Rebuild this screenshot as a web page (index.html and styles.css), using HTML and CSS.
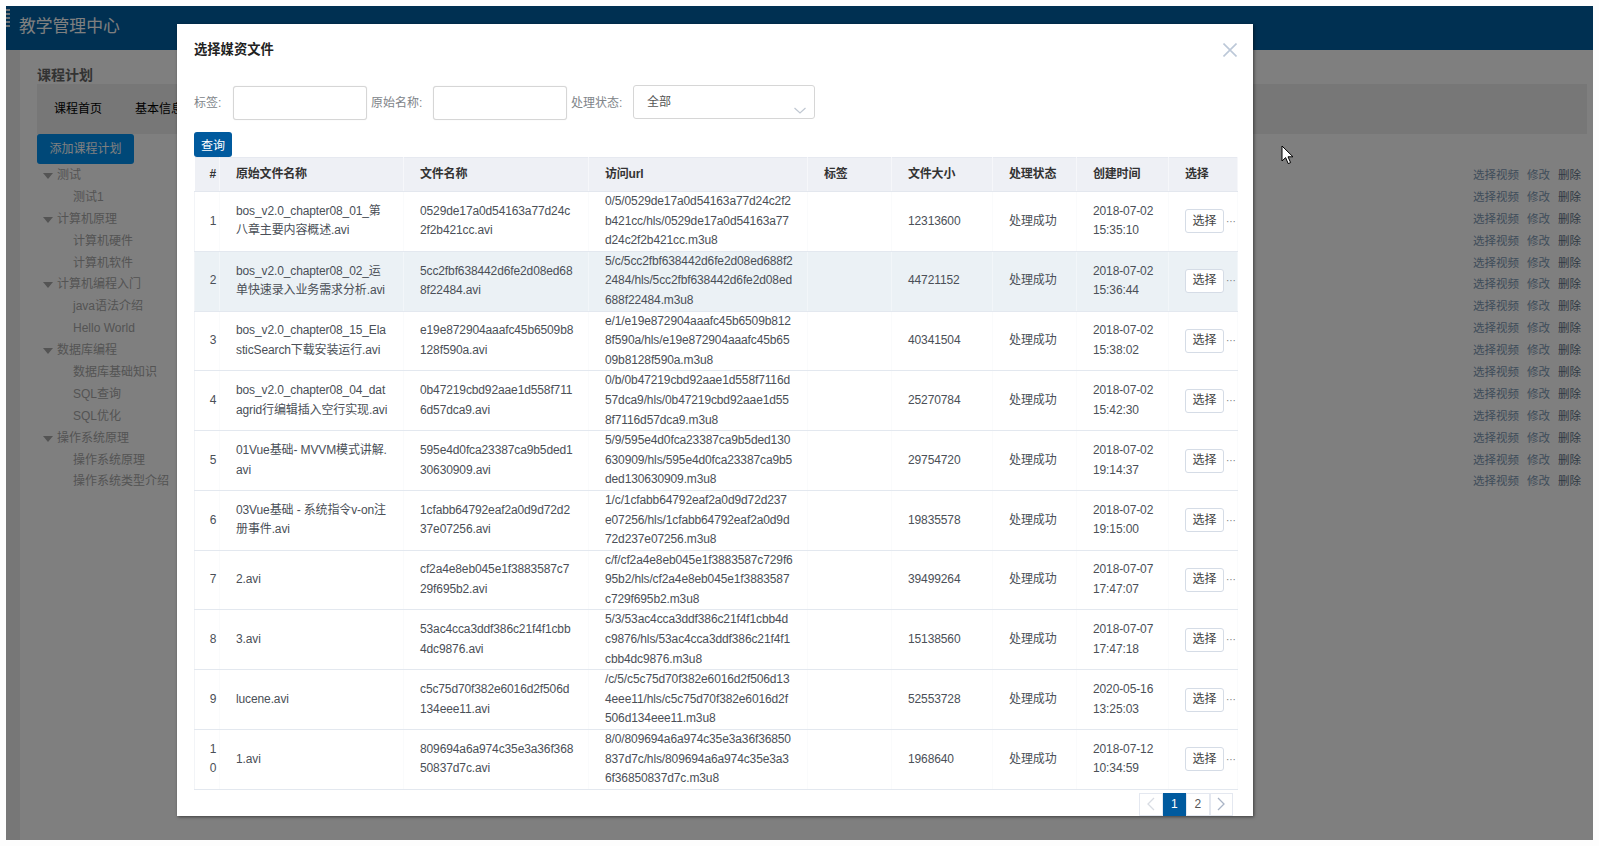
FILE: index.html
```html
<!DOCTYPE html>
<html lang="zh-CN">
  <head>
    <meta charset="UTF-8" />
    <title>教学管理中心</title>
    <link rel="stylesheet" href="styles.css">
  </head>
  <body>
    <div class="app">
      <div class="topbar">
        <span class="logo-mark"></span>
        <span class="brand">教学管理中心</span>
      </div>
      <div class="layout">
        <div class="strip"></div>
        <div class="content">
          <h2 class="page-title">课程计划</h2>
          <div class="tabs">
            <span class="tab">课程首页</span>
            <span class="tab">基本信息</span>
          </div>
          <button class="add-btn">添加课程计划</button>
          <div class="plan-list">
            <div class="plan-row parent"><span class="tree-name"><i class="caret"></i>测试</span><span class="ops"><a>选择视频</a><a>修改</a><a class="del">删除</a></span></div>
            <div class="plan-row child"><span class="tree-name">测试1</span><span class="ops"><a>选择视频</a><a>修改</a><a class="del">删除</a></span></div>
            <div class="plan-row parent"><span class="tree-name"><i class="caret"></i>计算机原理</span><span class="ops"><a>选择视频</a><a>修改</a><a class="del">删除</a></span></div>
            <div class="plan-row child"><span class="tree-name">计算机硬件</span><span class="ops"><a>选择视频</a><a>修改</a><a class="del">删除</a></span></div>
            <div class="plan-row child"><span class="tree-name">计算机软件</span><span class="ops"><a>选择视频</a><a>修改</a><a class="del">删除</a></span></div>
            <div class="plan-row parent"><span class="tree-name"><i class="caret"></i>计算机编程入门</span><span class="ops"><a>选择视频</a><a>修改</a><a class="del">删除</a></span></div>
            <div class="plan-row child"><span class="tree-name">java语法介绍</span><span class="ops"><a>选择视频</a><a>修改</a><a class="del">删除</a></span></div>
            <div class="plan-row child"><span class="tree-name">Hello World</span><span class="ops"><a>选择视频</a><a>修改</a><a class="del">删除</a></span></div>
            <div class="plan-row parent"><span class="tree-name"><i class="caret"></i>数据库编程</span><span class="ops"><a>选择视频</a><a>修改</a><a class="del">删除</a></span></div>
            <div class="plan-row child"><span class="tree-name">数据库基础知识</span><span class="ops"><a>选择视频</a><a>修改</a><a class="del">删除</a></span></div>
            <div class="plan-row child"><span class="tree-name">SQL查询</span><span class="ops"><a>选择视频</a><a>修改</a><a class="del">删除</a></span></div>
            <div class="plan-row child"><span class="tree-name">SQL优化</span><span class="ops"><a>选择视频</a><a>修改</a><a class="del">删除</a></span></div>
            <div class="plan-row parent"><span class="tree-name"><i class="caret"></i>操作系统原理</span><span class="ops"><a>选择视频</a><a>修改</a><a class="del">删除</a></span></div>
            <div class="plan-row child"><span class="tree-name">操作系统原理</span><span class="ops"><a>选择视频</a><a>修改</a><a class="del">删除</a></span></div>
            <div class="plan-row child"><span class="tree-name">操作系统类型介绍</span><span class="ops"><a>选择视频</a><a>修改</a><a class="del">删除</a></span></div>
          </div>
        </div>
      </div>

      <div class="overlay">
        <div class="dialog">
          <div class="dialog-title">选择媒资文件</div>
          <svg class="dialog-close" viewBox="0 0 14 14" width="14" height="14"><path d="M0.5 0.5L13.5 13.5M13.5 0.5L0.5 13.5" fill="none" stroke="#bcc8d8" stroke-width="1.6"/></svg>

          <div class="filter-row">
            <label class="filter-label label-tag">标签:</label>
            <input class="filter-input" type="text" />
            <label class="filter-label">原始名称:</label>
            <input class="filter-input" type="text" />
            <label class="filter-label">处理状态:</label>
            <div class="filter-select">
              全部
              <svg class="select-arrow" viewBox="0 0 12 7" width="12" height="7"><path d="M0.5 1L6 6L11.5 1" fill="none" stroke="#c0c8d2" stroke-width="1.2"/></svg>
            </div>
          </div>
          <button class="query-btn">查询</button>

          <table class="media-table">
            <thead>
              <tr>
                <th class="col-no">#</th>
                <th class="col-origin">原始文件名称</th>
                <th class="col-file">文件名称</th>
                <th class="col-url">访问url</th>
                <th class="col-tag">标签</th>
                <th class="col-size">文件大小</th>
                <th class="col-status">处理状态</th>
                <th class="col-time">创建时间</th>
                <th class="col-pick">选择</th>
              </tr>
            </thead>
            <tbody>
              <tr>
                <td class="col-no">1</td>
                <td>bos_v2.0_chapter08_01_第<br>八章主要内容概述.avi</td>
                <td>0529de17a0d54163a77d24c<br>2f2b421cc.avi</td>
                <td>0/5/0529de17a0d54163a77d24c2f2<br>b421cc/hls/0529de17a0d54163a77<br>d24c2f2b421cc.m3u8</td>
                <td></td>
                <td>12313600</td>
                <td>处理成功</td>
                <td>2018-07-02<br>15:35:10</td>
                <td class="col-pick"><button class="pick-btn">选择</button><span class="more">···</span></td>
              </tr>
              <tr class="hover">
                <td class="col-no">2</td>
                <td>bos_v2.0_chapter08_02_运<br>单快速录入业务需求分析.avi</td>
                <td>5cc2fbf638442d6fe2d08ed68<br>8f22484.avi</td>
                <td>5/c/5cc2fbf638442d6fe2d08ed688f2<br>2484/hls/5cc2fbf638442d6fe2d08ed<br>688f22484.m3u8</td>
                <td></td>
                <td>44721152</td>
                <td>处理成功</td>
                <td>2018-07-02<br>15:36:44</td>
                <td class="col-pick"><button class="pick-btn">选择</button><span class="more">···</span></td>
              </tr>
              <tr>
                <td class="col-no">3</td>
                <td>bos_v2.0_chapter08_15_Ela<br>sticSearch下载安装运行.avi</td>
                <td>e19e872904aaafc45b6509b8<br>128f590a.avi</td>
                <td>e/1/e19e872904aaafc45b6509b812<br>8f590a/hls/e19e872904aaafc45b65<br>09b8128f590a.m3u8</td>
                <td></td>
                <td>40341504</td>
                <td>处理成功</td>
                <td>2018-07-02<br>15:38:02</td>
                <td class="col-pick"><button class="pick-btn">选择</button><span class="more">···</span></td>
              </tr>
              <tr>
                <td class="col-no">4</td>
                <td>bos_v2.0_chapter08_04_dat<br>agrid行编辑插入空行实现.avi</td>
                <td>0b47219cbd92aae1d558f711<br>6d57dca9.avi</td>
                <td>0/b/0b47219cbd92aae1d558f7116d<br>57dca9/hls/0b47219cbd92aae1d55<br>8f7116d57dca9.m3u8</td>
                <td></td>
                <td>25270784</td>
                <td>处理成功</td>
                <td>2018-07-02<br>15:42:30</td>
                <td class="col-pick"><button class="pick-btn">选择</button><span class="more">···</span></td>
              </tr>
              <tr>
                <td class="col-no">5</td>
                <td>01Vue基础- MVVM模式讲解.<br>avi</td>
                <td>595e4d0fca23387ca9b5ded1<br>30630909.avi</td>
                <td>5/9/595e4d0fca23387ca9b5ded130<br>630909/hls/595e4d0fca23387ca9b5<br>ded130630909.m3u8</td>
                <td></td>
                <td>29754720</td>
                <td>处理成功</td>
                <td>2018-07-02<br>19:14:37</td>
                <td class="col-pick"><button class="pick-btn">选择</button><span class="more">···</span></td>
              </tr>
              <tr>
                <td class="col-no">6</td>
                <td>03Vue基础 - 系统指令v-on注<br>册事件.avi</td>
                <td>1cfabb64792eaf2a0d9d72d2<br>37e07256.avi</td>
                <td>1/c/1cfabb64792eaf2a0d9d72d237<br>e07256/hls/1cfabb64792eaf2a0d9d<br>72d237e07256.m3u8</td>
                <td></td>
                <td>19835578</td>
                <td>处理成功</td>
                <td>2018-07-02<br>19:15:00</td>
                <td class="col-pick"><button class="pick-btn">选择</button><span class="more">···</span></td>
              </tr>
              <tr>
                <td class="col-no">7</td>
                <td>2.avi</td>
                <td>cf2a4e8eb045e1f3883587c7<br>29f695b2.avi</td>
                <td>c/f/cf2a4e8eb045e1f3883587c729f6<br>95b2/hls/cf2a4e8eb045e1f3883587<br>c729f695b2.m3u8</td>
                <td></td>
                <td>39499264</td>
                <td>处理成功</td>
                <td>2018-07-07<br>17:47:07</td>
                <td class="col-pick"><button class="pick-btn">选择</button><span class="more">···</span></td>
              </tr>
              <tr>
                <td class="col-no">8</td>
                <td>3.avi</td>
                <td>53ac4cca3ddf386c21f4f1cbb<br>4dc9876.avi</td>
                <td>5/3/53ac4cca3ddf386c21f4f1cbb4d<br>c9876/hls/53ac4cca3ddf386c21f4f1<br>cbb4dc9876.m3u8</td>
                <td></td>
                <td>15138560</td>
                <td>处理成功</td>
                <td>2018-07-07<br>17:47:18</td>
                <td class="col-pick"><button class="pick-btn">选择</button><span class="more">···</span></td>
              </tr>
              <tr>
                <td class="col-no">9</td>
                <td>lucene.avi</td>
                <td>c5c75d70f382e6016d2f506d<br>134eee11.avi</td>
                <td>/c/5/c5c75d70f382e6016d2f506d13<br>4eee11/hls/c5c75d70f382e6016d2f<br>506d134eee11.m3u8</td>
                <td></td>
                <td>52553728</td>
                <td>处理成功</td>
                <td>2020-05-16<br>13:25:03</td>
                <td class="col-pick"><button class="pick-btn">选择</button><span class="more">···</span></td>
              </tr>
              <tr>
                <td class="col-no">1<br>0</td>
                <td>1.avi</td>
                <td>809694a6a974c35e3a36f368<br>50837d7c.avi</td>
                <td>8/0/809694a6a974c35e3a36f36850<br>837d7c/hls/809694a6a974c35e3a3<br>6f36850837d7c.m3u8</td>
                <td></td>
                <td>1968640</td>
                <td>处理成功</td>
                <td>2018-07-12<br>10:34:59</td>
                <td class="col-pick"><button class="pick-btn">选择</button><span class="more">···</span></td>
              </tr>
            </tbody>
          </table>

          <div class="pager">
            <span class="page-item"><svg viewBox="0 0 8 14" width="8" height="14"><path d="M7 1L1 7L7 13" fill="none" stroke="#d8dce3" stroke-width="1.3"/></svg></span>
            <span class="page-item active">1</span>
            <span class="page-item">2</span>
            <span class="page-item"><svg viewBox="0 0 8 14" width="8" height="14"><path d="M1 1L7 7L1 13" fill="none" stroke="#a9b4c6" stroke-width="1.3"/></svg></span>
          </div>
        </div>
      </div>

      <svg class="cursor" viewBox="0 0 13 20" width="13" height="20"><path d="M1 1V16L4.6 12.6L7.2 18.6L9.6 17.6L7 11.8H12Z" fill="#fff" stroke="#000" stroke-width="1"/></svg>
    </div>
  </body>
</html>
```

FILE: styles.css
```css
* {
  box-sizing: border-box;
}
html,
body {
  height: 100%;
}
body {
  margin: 0;
  padding: 6px;
  background: #fdfdfd;
  font-family: "Liberation Sans", "Noto Sans CJK SC", sans-serif;
  font-size: 12px;
  overflow: hidden;
}
.app {
  position: relative;
  width: 1587px;
  height: 834px;
  background: #fff;
  overflow: hidden;
}
.topbar {
  display: flex;
  align-items: center;
  height: 44px;
  background: #0060a4;
  color: #fff;
}
.logo-mark {
  width: 4px;
  height: 18px;
  margin-top: -20px;
  background: repeating-linear-gradient(to bottom, #d8e2ea 0, #d8e2ea 2px, #0060a4 2px, #0060a4 4px);
}
.brand {
  margin: -6px 0 0 9px;
  font-size: 16.8px;
}
.layout {
  display: flex;
}
.strip {
  width: 14px;
  height: 790px;
  background: #eee;
}
.content {
  flex: 1;
  padding: 16px 12px 0 17px;
}
.page-title {
  margin: 0;
  height: 18px;
  font-size: 14px;
  line-height: 18px;
  color: #666;
}
.tabs {
  display: flex;
  gap: 33px;
  align-items: center;
  height: 50px;
  margin-right: -6px;
  padding: 0 0 4px 17px;
  background: #eee;
  color: #000;
}
.add-btn {
  display: block;
  width: 97px;
  height: 30px;
  margin: 0;
  padding: 0 0 4px;
  border: none;
  border-radius: 3px;
  background: #0090f0;
  color: #fff;
  font: inherit;
}
.plan-list {
  margin-top: 1px;
}
.plan-row {
  display: flex;
  justify-content: space-between;
  height: 21.9px;
  line-height: 21.9px;
}
.tree-name {
  color: #a8a8a8;
}
.parent .tree-name {
  padding-left: 6px;
}
.child .tree-name {
  padding-left: 36px;
}
.caret {
  display: inline-block;
  width: 0;
  height: 0;
  margin-right: 4px;
  vertical-align: 0;
  border-left: 5.5px solid transparent;
  border-right: 5.5px solid transparent;
  border-top: 6px solid #a8a8a8;
}
.ops {
  display: flex;
  gap: 8px;
  font-size: 11.5px;
}
.ops a {
  color: #7f9ab5;
}
.ops .del {
  color: #5f7488;
}

/* dialog over the page */
.overlay {
  position: absolute;
  top: 0;
  left: 0;
  right: 0;
  bottom: 0;
  padding: 18px 0 0 171px;
  background: rgba(0, 0, 0, 0.5);
}
.dialog {
  position: relative;
  width: 1076px;
  height: 792px;
  padding: 17px 16px 0 17px;
  background: #fff;
  box-shadow: 1px 1px 3px rgba(0, 0, 0, 0.5);
}
.dialog-title {
  height: 18px;
  font-size: 13.3px;
  font-weight: bold;
  line-height: 18px;
  color: #222;
}
.dialog-close {
  position: absolute;
  top: 19px;
  right: 16px;
}
.filter-row {
  display: flex;
  align-items: center;
  height: 35px;
  margin-top: 26px;
}
.filter-label {
  padding-bottom: 2px;
  color: #808489;
  white-space: nowrap;
}
.label-tag {
  width: 39px;
}
.filter-input {
  width: 134px;
  height: 34px;
  margin: 0 4px 0 0;
  border: 1px solid #d6d6d6;
  border-radius: 3px;
  box-shadow: 0 0 1px rgba(0, 0, 0, 0.15);
  background: #fff;
}
.filter-input + .filter-label {
  width: 62px;
}
.filter-select {
  position: relative;
  width: 182px;
  height: 34px;
  margin-top: -1px;
  padding-left: 13px;
  border: 1px solid #d6d6d6;
  border-radius: 3px;
  line-height: 33px;
  color: #555;
}
.select-arrow {
  position: absolute;
  right: 8px;
  bottom: 4px;
}
.query-btn {
  display: block;
  width: 38px;
  height: 25px;
  margin-top: 12px;
  padding: 0;
  border: none;
  border-radius: 3px;
  background: #005a9e;
  color: #fff;
  font: inherit;
}
.media-table {
  width: 1043px;
  border-collapse: collapse;
  table-layout: fixed;
  color: #4a4f57;
  line-height: 19.6px;
}
.media-table th {
  height: 34px;
  padding: 0 0 0 16px;
  border-top: 1px solid #e6e9f0;
  border-bottom: 1px solid #e3e7ee;
  border-right: 1px solid #f6f7fa;
  background: #eef0f5;
  color: #333;
  font-weight: bold;
  letter-spacing: -0.2px;
  text-align: left;
}
.media-table td {
  height: 59.3px;
  padding: 0 0 0 16px;
  border-bottom: 1px solid #e3e8ef;
  border-right: 1px solid #fafbfc;
  letter-spacing: -0.12px;
  white-space: nowrap;
}
.media-table td:first-child {
  border-left: 1px solid #f2f4f7;
}
.media-table .hover td {
  border-right-color: #f2f6f9;
  background: #ebf1f5;
}
.media-table .col-no {
  width: 25px;
  padding: 0 0 0 12px;
  text-align: center;
}
.col-origin { width: 184px; }
.col-file { width: 185px; }
.col-url { width: 219px; }
.col-tag { width: 84px; }
.col-size { width: 101px; }
.col-status { width: 84px; }
.col-time { width: 92px; }
.col-pick { width: 69px; }
.pick-btn {
  width: 39px;
  height: 24px;
  padding: 0;
  border: 1px solid #d5dce6;
  border-radius: 3px;
  background: #fff;
  color: #444;
  font: inherit;
  vertical-align: middle;
}
.more {
  margin-left: 2px;
  font-size: 10px;
  color: #777;
  vertical-align: middle;
}
.pager {
  display: flex;
  justify-content: flex-end;
  margin-top: 3px;
  padding-right: 4px;
}
.page-item {
  display: flex;
  align-items: center;
  justify-content: center;
  width: 23.5px;
  height: 23px;
  border: 1px solid #e4e8f0;
  color: #555;
}
.page-item.active {
  border-color: #005a9e;
  background: #005a9e;
  color: #fff;
}
.cursor {
  position: absolute;
  top: 139px;
  left: 1275px;
}
```
